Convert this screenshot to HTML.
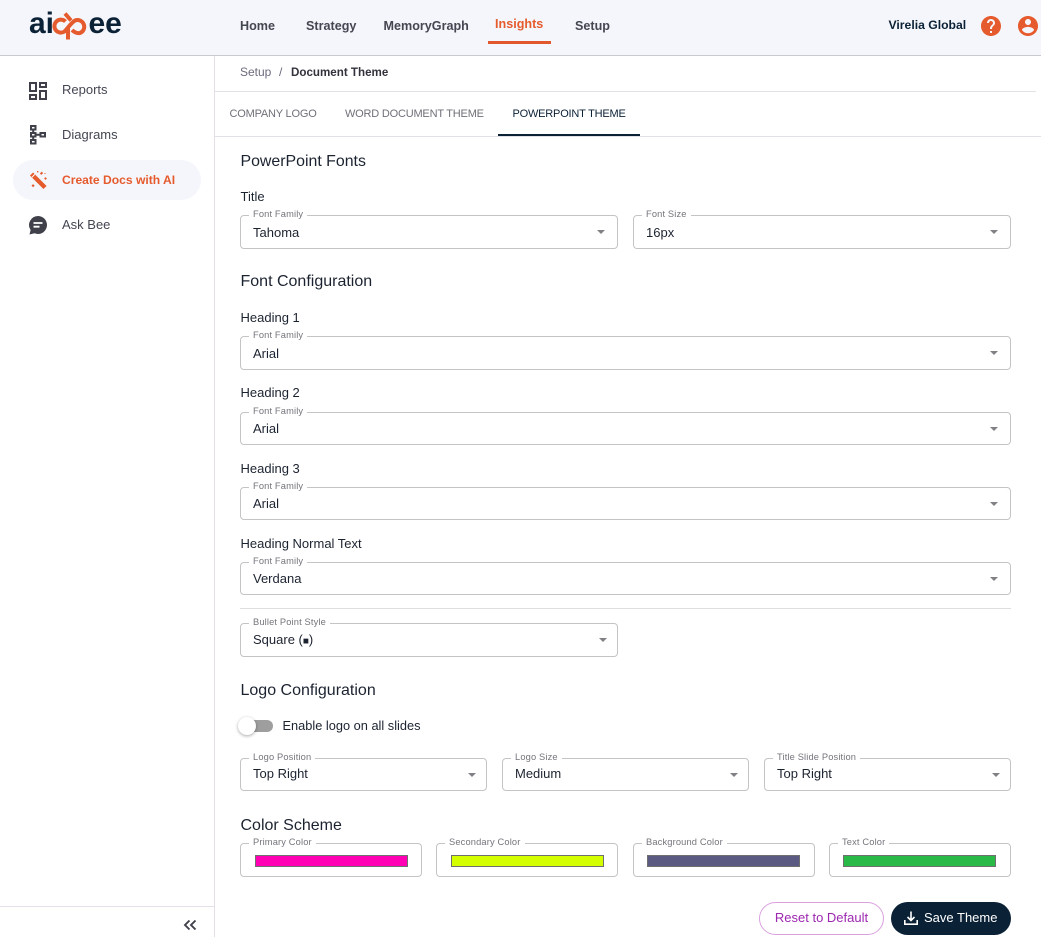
<!DOCTYPE html>
<html><head><meta charset="utf-8"><style>
html,body{margin:0;padding:0;background:#fff}
body{position:relative;width:1041px;height:937px;overflow:hidden;font-family:"Liberation Sans",sans-serif;color:#1c2330}
.a{position:absolute}
.t{position:absolute;white-space:nowrap;line-height:20px;font-size:13px}
.nav{font-weight:bold;color:#444652;font-size:12.6px}
.side{color:#444652;font-size:13px}
.tab{font-size:11px;color:#6f7078;letter-spacing:-.2px}
.h{font-size:16px;color:#1c2330;line-height:22px}
.sub{font-size:13px;color:#1c2330}
.f{position:absolute;box-sizing:border-box;border:1px solid #c4c4c4;border-radius:4px;background:#fff}
.l{position:absolute;left:8px;top:-7px;padding:0 4px;background:linear-gradient(#fff,#fff) 0 6px/100% 3px no-repeat;font-size:9.3px;line-height:11px;color:#74747c;white-space:nowrap;letter-spacing:.15px}
.v{position:absolute;left:12px;top:6px;font-size:13px;line-height:20px;color:#1c2330;white-space:nowrap}
.v7{top:7px}.v5{top:5px}
.ar{position:absolute;right:12.5px;top:14px;width:0;height:0;border-left:4.5px solid transparent;border-right:4.5px solid transparent;border-top:4.5px solid #808085}
.r2{right:10.5px}
.sw{position:absolute;left:14px;top:11px;right:13px;height:10px;border:1px solid #6f6f6f;box-sizing:content-box}
.s2{left:13px;right:14px}
</style></head><body>
<div class="a" style="left:0;top:0;width:1041px;height:55px;background:#f5f6fb;border-bottom:1px solid #c9c9ce"></div>

<svg class="a" style="left:25px;top:8px" width="105" height="36" viewBox="25 8 105 36">
<text x="29" y="33" font-family="Liberation Sans" font-weight="bold" font-size="30" fill="#0b2136">ai</text>
<text x="88.500" y="33" font-family="Liberation Sans" font-weight="bold" font-size="30" fill="#0b2136">ee</text>
<g fill="none" stroke="#e55b2d" stroke-width="4">
<path d="M65.500 21.500A6.500 6.500 0 1 0 64.500 31.500C68 28 70 24 75 20.500a6.500 6.500 0 1 1 5 12.500c-3 .5-6-1-8-3"/>
<path d="M68 39.500V27"/>
<path d="M65 13.500l6 7"/>
</g></svg>

<div class="t nav" style="left:240px;top:16px">Home</div>
<div class="t nav" style="left:306px;top:16px">Strategy</div>
<div class="t nav" style="left:383.500px;top:16px">MemoryGraph</div>
<div class="t nav" style="left:495px;top:14px;color:#e55b2d">Insights</div>
<div class="a" style="left:488px;top:41px;width:63px;height:3px;background:#e0582c"></div>
<div class="t nav" style="left:575px;top:16px">Setup</div>
<div class="t" style="left:888.500px;top:14.500px;font-weight:bold;color:#0b2136;font-size:12.200px">Virelia Global</div>
<svg class="a" style="left:979px;top:14px" width="24" height="24" viewBox="0 0 24 24"><path fill="#e55b2d" d="M12 2C6.480 2 2 6.480 2 12s4.480 10 10 10 10-4.480 10-10S17.520 2 12 2zm1 17h-2v-2h2v2zm2.070-7.750l-.9.920C13.450 12.900 13 13.500 13 15h-2v-.5c0-1.100.45-2.100 1.170-2.830l1.240-1.260c.37-.36.59-.86.59-1.410 0-1.100-.9-2-2-2s-2 .9-2 2H8c0-2.210 1.790-4 4-4s4 1.790 4 4c0 .88-.36 1.680-.93 2.250z"/></svg>
<svg class="a" style="left:1016px;top:14px" width="24" height="24" viewBox="0 0 24 24"><path fill="#e55b2d" d="M12 2C6.480 2 2 6.480 2 12s4.480 10 10 10 10-4.480 10-10S17.520 2 12 2zm0 3c1.660 0 3 1.340 3 3s-1.340 3-3 3-3-1.340-3-3 1.340-3 3-3zm0 14.200c-2.500 0-4.710-1.280-6-3.220.03-1.990 4-3.080 6-3.080 1.990 0 5.970 1.090 6 3.080-1.290 1.940-3.500 3.220-6 3.220z"/></svg>

<div class="a" style="left:214px;top:56px;width:1px;height:881px;background:#e6dfe9"></div>
<div class="a" style="left:13px;top:160px;width:188px;height:40px;border-radius:20px;background:#f5f6fb"></div>
<svg class="a" style="left:29px;top:82px" width="18" height="18" viewBox="3 3 18 18"><path fill="#3f4049" d="M19 5v2h-4V5h4M9 5v6H5V5h4m10 8v6h-4v-6h4M9 17v2H5v-2h4M21 3h-8v6h8V3zM11 3H3v10h8V3zm10 8h-8v10h8V11zm-10 4H3v6h8v-6z"/></svg>
<svg class="a" style="left:29px;top:125px" width="18" height="20" viewBox="0 0 18 20" fill="none" stroke="#3f4049" stroke-width="2"><rect x="2" y="1" width="4.500" height="3.500"/><rect x="2" y="8" width="4.500" height="3.500"/><rect x="2" y="15" width="4.500" height="3.500"/><rect x="11.500" y="8" width="4.500" height="3.500"/><path d="M4.200 4.500V8M4.200 11.500V15M6.500 9.750H11.500"/></svg>
<svg class="a" style="left:28px;top:170px" width="20" height="20" viewBox="0 0 20 20"><path stroke="#e55b2d" stroke-width="4.400" d="M3.500 4L17 17.500" fill="none"/><path stroke="#fff" stroke-width="1" d="M6.700 4.400L4 7.200" fill="none"/><g fill="#e55b2d"><rect x="12.500" y="2" width="2" height="2.600" transform="rotate(45 13.500 3.300)"/><rect x="16.500" y="7.500" width="2" height="2" transform="rotate(45 17.500 8.500)"/><rect x="4" y="14.500" width="2.200" height="2.200" transform="rotate(45 5 15.600)"/><rect x="9" y="1" width="1.400" height="1.400"/><rect x="16.500" y="3" width="1" height="1"/></g></svg>
<svg class="a" style="left:28px;top:215px" width="20" height="20" viewBox="0 0 20 20"><path fill="#3f4049" d="M10 1a9 9 0 1 1-3.500 17.300L1.500 19.500l1.100-4.500A9 9 0 0 1 10 1z"/><path stroke="#fff" stroke-width="1.800" d="M5.500 8h9M5.500 11.700h6"/></svg>
<div class="t side" style="left:62px;top:80px">Reports</div>
<div class="t side" style="left:62px;top:125px">Diagrams</div>
<div class="t side" style="left:62px;top:170px;color:#e55b2d;font-weight:bold;font-size:12.100px">Create Docs with AI</div>
<div class="t side" style="left:62px;top:215px">Ask Bee</div>
<div class="a" style="left:0;top:906px;width:214px;height:1px;background:#e6dfe9"></div>
<svg class="a" style="left:182px;top:917px" width="16" height="16" viewBox="0 0 16 16" fill="none" stroke="#3f4049" stroke-width="1.900"><path d="M7.500 3.500L3 8l4.500 4.500M13.500 3.500L9 8l4.500 4.500"/></svg>

<div class="t" style="left:240px;top:62px;font-size:12px;color:#6d6a7c">Setup</div>
<div class="t" style="left:279px;top:62px;font-size:12px;color:#6d6a7c">/</div>
<div class="t" style="left:291px;top:62.500px;font-size:11.600px;font-weight:bold;color:#33333d">Document Theme</div>
<div class="a" style="left:215px;top:91px;width:821px;height:1px;background:#e3e1e6"></div>
<div class="t tab" style="left:229.500px;top:103.500px">COMPANY LOGO</div>
<div class="t tab" style="left:345px;top:103.500px">WORD DOCUMENT THEME</div>
<div class="t tab" style="left:512.500px;top:103.500px;color:#0b2136">POWERPOINT THEME</div>
<div class="a" style="left:215px;top:136px;width:826px;height:1px;background:#e3e1e6"></div>
<div class="a" style="left:498px;top:134px;width:142px;height:2px;background:#0b2136"></div>

<div class="t h" style="left:240.500px;top:151px;font-size:15.900px">PowerPoint Fonts</div>
<div class="t sub" style="left:240.500px;top:187px">Title</div>
<div class="f" style="left:240px;top:215px;width:378px;height:34px"><div class="l">Font Family</div><div class="v v7">Tahoma</div><div class="ar"></div></div>
<div class="f" style="left:633px;top:215px;width:378px;height:34px"><div class="l">Font Size</div><div class="v v7">16px</div><div class="ar"></div></div>

<div class="t h" style="left:240.500px;top:271px">Font Configuration</div>
<div class="t sub" style="left:240.500px;top:308px">Heading 1</div>
<div class="f" style="left:240px;top:336px;width:771px;height:34px"><div class="l">Font Family</div><div class="v v7">Arial</div><div class="ar"></div></div>
<div class="t sub" style="left:240.500px;top:383px">Heading 2</div>
<div class="f" style="left:240px;top:412px;width:771px;height:33px"><div class="l">Font Family</div><div class="v">Arial</div><div class="ar"></div></div>
<div class="t sub" style="left:240.500px;top:459px">Heading 3</div>
<div class="f" style="left:240px;top:487px;width:771px;height:33px"><div class="l">Font Family</div><div class="v">Arial</div><div class="ar"></div></div>
<div class="t sub" style="left:240.500px;top:534px">Heading Normal Text</div>
<div class="f" style="left:240px;top:562px;width:771px;height:33px"><div class="l">Font Family</div><div class="v">Verdana</div><div class="ar"></div></div>
<div class="a" style="left:240px;top:608px;width:771px;height:1px;background:#dedede"></div>
<div class="f" style="left:240px;top:623px;width:378px;height:34px"><div class="l">Bullet Point Style</div><div class="v">Square (<span style="font-size:10px">■</span>)</div><div class="ar r2"></div></div>

<div class="t h" style="left:240.500px;top:680px">Logo Configuration</div>
<div class="a" style="left:245px;top:720px;width:28px;height:12px;border-radius:6px;background:#9e9e9e"></div>
<div class="a" style="left:238px;top:717px;width:18px;height:18px;border-radius:50%;background:#fff;box-shadow:0 1px 3px rgba(0,0,0,.35)"></div>
<div class="t sub" style="left:282.500px;top:716px;font-size:12.800px">Enable logo on all slides</div>
<div class="f" style="left:240px;top:758px;width:247px;height:33px"><div class="l">Logo Position</div><div class="v v5">Top Right</div><div class="ar r2"></div></div>
<div class="f" style="left:502px;top:758px;width:247px;height:33px"><div class="l">Logo Size</div><div class="v v5">Medium</div><div class="ar r2"></div></div>
<div class="f" style="left:764px;top:758px;width:247px;height:33px"><div class="l">Title Slide Position</div><div class="v v5">Top Right</div><div class="ar r2"></div></div>

<div class="t h" style="left:240.500px;top:815px">Color Scheme</div>
<div class="f" style="left:240px;top:843px;width:182px;height:34px"><div class="l">Primary Color</div><div class="sw" style="background:#ff00b4"></div></div>
<div class="f" style="left:436px;top:843px;width:182px;height:34px"><div class="l">Secondary Color</div><div class="sw" style="background:#d4ff00"></div></div>
<div class="f" style="left:633px;top:843px;width:182px;height:34px"><div class="l">Background Color</div><div class="sw s2" style="background:#5a5a82"></div></div>
<div class="f" style="left:829px;top:843px;width:182px;height:34px"><div class="l">Text Color</div><div class="sw s2" style="background:#28b946"></div></div>

<div class="a" style="left:759px;top:902px;width:125px;height:33px;box-sizing:border-box;border:1px solid #d9a0de;border-radius:17px;color:#9c27b0;font-size:13px;line-height:30px;text-align:center;background:#fff">Reset to Default</div>
<div class="a" style="left:891px;top:902px;width:120px;height:33px;border-radius:17px;background:#0b2136"></div>
<svg class="a" style="left:903px;top:910px" width="16" height="16" viewBox="0 0 16 16" fill="none" stroke="#fff" stroke-width="1.600"><path d="M8 1.500V10M4.500 7L8 10.500 11.500 7M1.800 10v4.200h12.400V10"/></svg>
<div class="t" style="left:924px;top:907.500px;color:#fff;font-size:13px">Save Theme</div>
</body></html>
